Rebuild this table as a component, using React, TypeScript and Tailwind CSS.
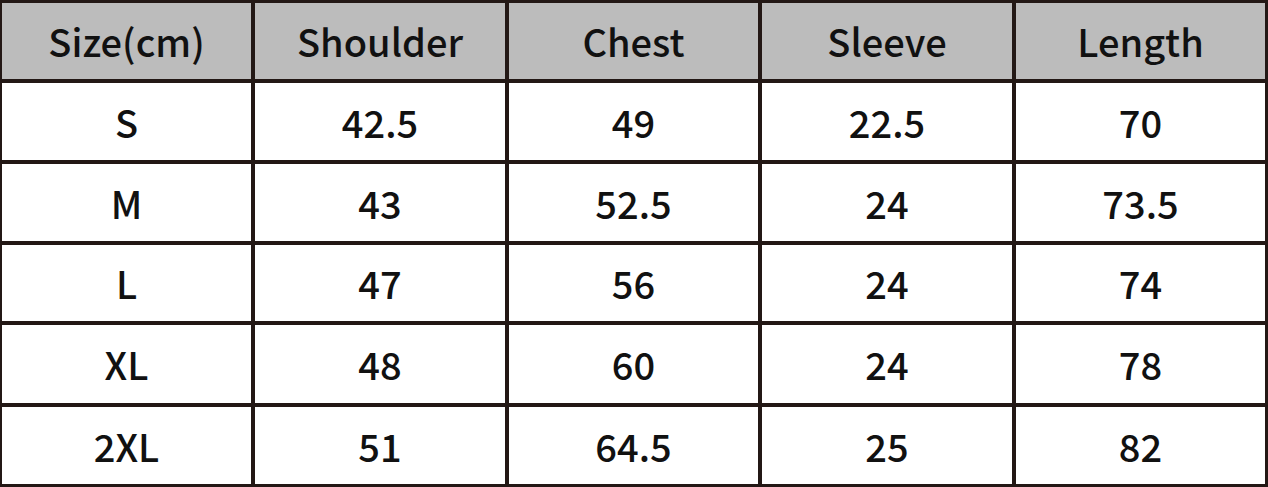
import React from "react";

const headers = ["Size(cm)", "Shoulder", "Chest", "Sleeve", "Length"];
const rows = [
  ["S", "42.5", "49", "22.5", "70"],
  ["M", "43", "52.5", "24", "73.5"],
  ["L", "47", "56", "24", "74"],
  ["XL", "48", "60", "24", "78"],
  ["2XL", "51", "64.5", "25", "82"],
];

export default function App() {
  return (
    <div
      className="w-[1268px] h-[487px] bg-[#231815] pt-[3px] pl-[2px] pr-[3px] pb-[3px] grid grid-cols-[249px_250px_249px_250px_249px] grid-rows-[76px_77px_77px_76px_78px_77px] gap-[4px] text-[#111] text-[38px] font-medium"
      style={{ fontFamily: '"Noto Sans CJK SC", "Noto Sans", sans-serif' }}
    >
      {headers.map((h) => (
        <div key={h} className="bg-[#bcbcbc] flex items-center justify-center leading-none">
          {h}
        </div>
      ))}
      {rows.map((r, i) =>
        r.map((c, j) => (
          <div key={i + "-" + j} className="bg-white flex items-center justify-center leading-none">
            {c}
          </div>
        ))
      )}
    </div>
  );
}
